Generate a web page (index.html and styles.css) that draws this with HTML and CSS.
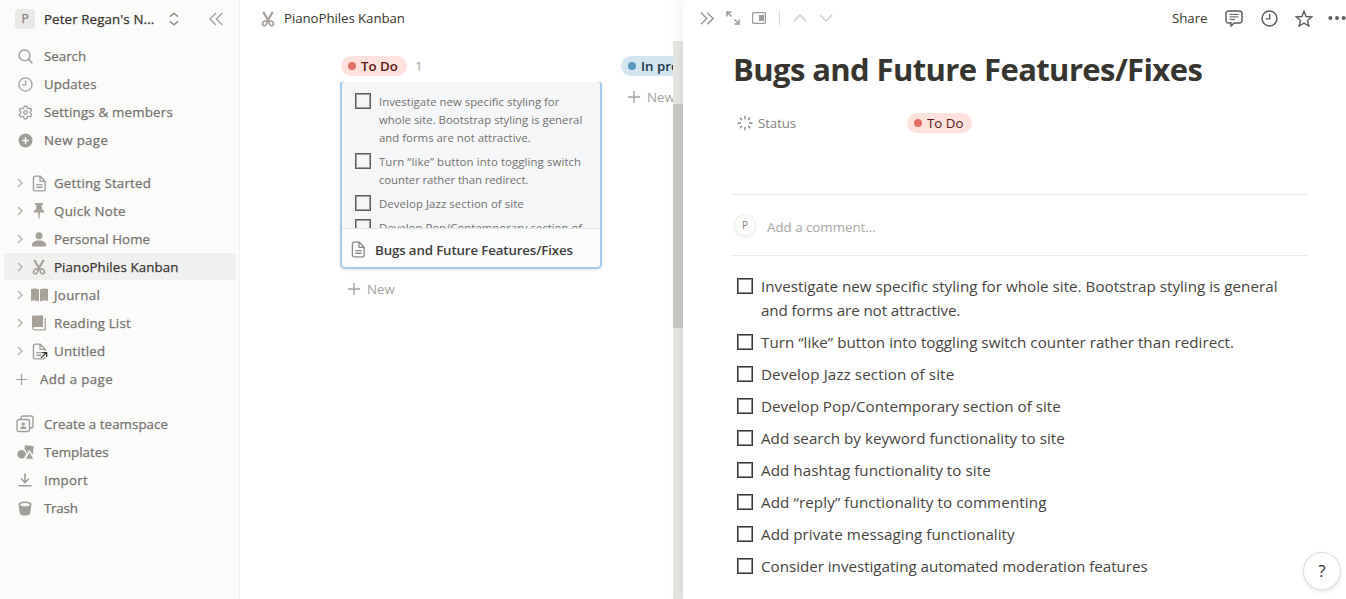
FILE: index.html
```html
<!DOCTYPE html>
<html lang="en">
<head>
<meta charset="utf-8">
<title>PianoPhiles Kanban</title>
<link rel="stylesheet" href="styles.css">
</head>
<body>
<svg class="defs" width="0" height="0">
  <defs>
    <symbol id="page" viewBox="0 0 16 18"><path d="M3.500 1.200h5.300L14 6.600v8.200a2 2 0 0 1-2 2H3.500a2 2 0 0 1-2-2V3.200a2 2 0 0 1 2-2zM8.600 1.600v5.200h5.200M4.600 10.200h6.600M4.600 13h6.600" fill="none" stroke="currentColor" stroke-width="1.400"/></symbol>
    <symbol id="caret" viewBox="0 0 6 10"><path d="M1 1l4 4-4 4" fill="none" stroke="currentColor" stroke-width="1.400"/></symbol>
    <symbol id="plus" viewBox="0 0 12 12"><path d="M6 0v12M0 6h12" stroke="currentColor" stroke-width="1.300"/></symbol>
    <symbol id="clock" viewBox="0 0 16 16"><circle cx="8" cy="8" r="7" fill="none" stroke="currentColor" stroke-width="1.400"/><path d="M8.200 3.800v4.600H4.400" fill="none" stroke="currentColor" stroke-width="1.300"/></symbol>
    <symbol id="scissors" viewBox="0 0 14 16"><path d="M2.300 1l5.900 10M11.700 1L5.800 11" fill="none" stroke="currentColor" stroke-width="2.300"/><ellipse cx="3.700" cy="12.400" rx="1.900" ry="2.500" transform="rotate(32 3.700 12.400)" fill="none" stroke="currentColor" stroke-width="1.700"/><ellipse cx="10.300" cy="12.400" rx="1.900" ry="2.500" transform="rotate(-32 10.300 12.400)" fill="none" stroke="currentColor" stroke-width="1.700"/></symbol>
  </defs>
</svg>
<div class="app">
  <nav class="sidebar">
    <div class="workspace">
      <span class="workspace-avatar">P</span>
      <span class="workspace-name">Peter Regan's N...</span>
      <svg class="switcher" width="10" height="14" viewBox="0 0 10 14"><path d="M1 4.600L5 1.200l4 3.400M1 9.400l4 3.400 4-3.400" fill="none" stroke="currentColor" stroke-width="1.500"/></svg>
      <svg class="collapse" width="14" height="14" viewBox="0 0 14 14"><path d="M7 1L1 7l6 6M13.300 1l-6 6 6 6" fill="none" stroke="currentColor" stroke-width="1.400"/></svg>
    </div>
    <div class="group">
      <div class="item"><span class="ico"><svg width="15" height="15" viewBox="0 0 15 15"><circle cx="6.600" cy="6.400" r="5.400" fill="none" stroke="currentColor" stroke-width="1.400"/><path d="M10.600 10.300l3.700 3.800" stroke="currentColor" stroke-width="1.600"/></svg></span><span class="t-search">Search</span></div>
      <div class="item"><span class="ico"><svg width="15" height="15"><use href="#clock"/></svg></span><span class="t-updates">Updates</span></div>
      <div class="item"><span class="ico"><svg width="15" height="15" viewBox="0 0 15 15"><path d="M6.200.7h2.600l.5 2 1.100.65 2-.6 1.300 2.250-1.500 1.450v1.300l1.500 1.450-1.300 2.250-2-.6-1.100.65-.5 2H6.200l-.5-2-1.100-.65-2 .6L1.300 9.200l1.500-1.450v-1.300L1.300 5l1.300-2.250 2 .6 1.100-.65z" transform="translate(0 .4)" fill="none" stroke="currentColor" stroke-width="1.300" stroke-linejoin="round"/><circle cx="7.500" cy="7.500" r="1.800" fill="none" stroke="currentColor" stroke-width="1.300"/></svg></span><span class="t-settings">Settings &amp; members</span></div>
      <div class="item"><span class="ico"><svg width="15" height="15" viewBox="0 0 15 15"><circle cx="7.500" cy="7.500" r="7" fill="currentColor"/><path d="M7.500 4.200v6.600M4.200 7.500h6.600" stroke="#fbfbfa" stroke-width="1.500"/></svg></span><span class="t-newpage">New page</span></div>
    </div>
    <div class="group pages">
      <div class="item"><svg class="caret" width="6" height="10"><use href="#caret"/></svg><span class="ico"><svg width="15" height="17"><use href="#page"/></svg></span><span class="t-getting">Getting Started</span></div>
      <div class="item"><svg class="caret" width="6" height="10"><use href="#caret"/></svg><span class="ico solid"><svg width="12" height="16" viewBox="0 0 12 16"><path d="M2 0h8v1.600L8.600 2.500l.5 4c1.500.6 2.400 1.700 2.400 3H7l-.6 6.200h-.8L5 9.500H.5c0-1.300.9-2.400 2.400-3l.5-4L2 1.600z" fill="currentColor"/></svg></span><span class="t-quick">Quick Note</span></div>
      <div class="item"><svg class="caret" width="6" height="10"><use href="#caret"/></svg><span class="ico solid"><svg width="14" height="15" viewBox="0 0 14 15"><circle cx="7" cy="3.700" r="3.500" fill="currentColor"/><path d="M0 14.500v-1.500c0-3 3-4.500 7-4.500s7 1.500 7 4.500v1.500z" fill="currentColor"/></svg></span><span class="t-personal">Personal Home</span></div>
      <div class="item active"><svg class="caret" width="6" height="10"><use href="#caret"/></svg><span class="ico solid"><svg width="14" height="16"><use href="#scissors"/></svg></span><span class="t-piano">PianoPhiles Kanban</span></div>
      <div class="item"><svg class="caret" width="6" height="10"><use href="#caret"/></svg><span class="ico solid"><svg width="17" height="14" viewBox="0 0 17 14"><path d="M0 1c3-.9 6-.7 8 .6v12c-2-1.100-5-1.300-8-.6zM17 1c-3-.9-6-.7-8 .6v12c2-1.100 5-1.300 8-.6z" fill="currentColor"/></svg></span><span class="t-journal">Journal</span></div>
      <div class="item"><svg class="caret" width="6" height="10"><use href="#caret"/></svg><span class="ico solid"><svg width="14" height="16" viewBox="0 0 14 16"><path d="M1.300.5H11v11.500H2.500c-.8 0-1.200.3-1.200.8H0V2C0 1 .5.500 1.300.5z" fill="currentColor"/><path d="M13.200 3v11.800H3c-1.400 0-2.300-.6-2.300-2.300" fill="none" stroke="currentColor" stroke-width="1.300"/></svg></span><span class="t-reading">Reading List</span></div>
      <div class="item"><svg class="caret" width="6" height="10"><use href="#caret"/></svg><span class="ico linked"><svg width="15" height="17"><use href="#page"/></svg><svg class="link-arrow" width="8" height="8" viewBox="0 0 9 9"><path d="M1 8l5.500-5.500M2.500 1.700h5v5" fill="none" stroke="#fbfbfa" stroke-width="3.500"/><path d="M1 8l6-6M2.500 1.700h5v5" fill="none" stroke="#37352f" stroke-width="1.400"/></svg></span><span class="t-untitled">Untitled</span></div>
      <div class="item add"><svg width="11" height="11"><use href="#plus"/></svg><span class="t-addpage">Add a page</span></div>
    </div>
    <div class="group tools">
      <div class="item"><span class="ico"><svg width="18" height="18" viewBox="0 0 18 18"><path d="M5 4V3a2 2 0 0 1 2-2h8a2 2 0 0 1 2 2v8a2 2 0 0 1-2 2h-1.200" fill="none" stroke="currentColor" stroke-width="1.400"/><rect x="1" y="4.500" width="12.500" height="12" rx="2" fill="none" stroke="currentColor" stroke-width="1.400"/><circle cx="7.200" cy="9" r="1.700" fill="currentColor"/><path d="M4 14c0-2 1.200-2.800 3.200-2.800s3.200.8 3.200 2.800z" fill="currentColor"/></svg></span><span class="t-create">Create a teamspace</span></div>
      <div class="item"><span class="ico"><svg width="17" height="15" viewBox="0 0 17 15"><path d="M8 .3l8.600.8-.6 8-1-.1-2.500-4.200-3 4.500C10 6 8.500 4.600 7.400 4.300z" fill="currentColor"/><circle cx="4.600" cy="9.200" r="4.200" fill="currentColor"/><path d="M12.500 6.800l4.300 7.400H8.200z" fill="currentColor" stroke="#fbfbfa" stroke-width=".8"/></svg></span><span class="t-templates">Templates</span></div>
      <div class="item"><span class="ico"><svg width="14" height="14" viewBox="0 0 14 14"><path d="M7 .5v8.700M3 5.500l4 4 4-4M.3 12.700h13.400" fill="none" stroke="currentColor" stroke-width="1.600"/></svg></span><span class="t-import">Import</span></div>
      <div class="item"><span class="ico"><svg width="14" height="15" viewBox="0 0 14 15"><path d="M.5 3.500C.5 1.500 3 .5 7 .5s6.500 1 6.500 3l-1.300 8.700c-.3 1.500-2.400 2.300-5.200 2.300s-4.900-.8-5.200-2.300z" fill="currentColor"/><ellipse cx="7" cy="3.700" rx="4.700" ry="1.600" fill="#fbfbfa"/></svg></span><span class="t-trash">Trash</span></div>
    </div>
  </nav>

  <main class="main">
    <header class="crumb"><svg width="14" height="16"><use href="#scissors"/></svg><span class="t-crumb">PianoPhiles Kanban</span></header>
    <div class="board-wrap">
      <div class="board">
        <section class="column">
          <div class="column-head"><span class="pill red"><i></i><b class="t-todo">To Do</b></span><span class="count">1</span></div>
          <div class="card-clip">
            <article class="card">
              <div class="preview">
                <div class="todo"><span class="box"></span><p><span class="c1">Investigate new specific styling for</span><br><span class="c2">whole site. Bootstrap styling is general</span><br><span class="c3">and forms are not attractive.</span></p></div>
                <div class="todo"><span class="box"></span><p><span class="c4">Turn “like” button into toggling switch</span><br><span class="c5">counter rather than redirect.</span></p></div>
                <div class="todo"><span class="box"></span><p><span class="c6">Develop Jazz section of site</span></p></div>
                <div class="todo"><span class="box"></span><p><span class="c7">Develop Pop/Contemporary section of</span></p></div>
              </div>
              <div class="card-title"><svg width="15" height="17"><use href="#page"/></svg><span class="t-card">Bugs and Future Features/Fixes</span></div>
            </article>
          </div>
          <div class="new"><svg width="12" height="12"><use href="#plus"/></svg><span>New</span></div>
        </section>
        <section class="column">
          <div class="column-head"><span class="pill blue"><i></i><b class="t-prog">In progress</b></span></div>
          <div class="new near"><svg width="12" height="12"><use href="#plus"/></svg><span>New</span></div>
        </section>
      </div>
      <div class="scrollbar"><div class="thumb"></div></div>
    </div>
  </main>

  <aside class="peek">
    <header class="peek-bar">
      <svg class="b-close" width="14" height="13" viewBox="0 0 14 13"><path d="M1 .7l5.800 5.800L1 12.300M7.300.7l5.800 5.800-5.800 5.800" fill="none" stroke="currentColor" stroke-width="1.500"/></svg>
      <svg class="b-expand" width="14" height="14" viewBox="0 0 14 14"><path d="M1 5.500V1h4.500M1.200 1.200l4.300 4.300M13 8.500V13H8.500M12.800 12.800L8.500 8.500" fill="none" stroke="currentColor" stroke-width="1.500"/></svg>
      <svg class="b-side" width="14" height="12" viewBox="0 0 14 12"><rect x=".6" y=".6" width="12.800" height="10.800" rx="1.200" fill="none" stroke="currentColor" stroke-width="1.300"/><path d="M7 3h5v6H7z" fill="currentColor"/></svg>
      <span class="sep"></span>
      <svg class="b-up" width="14" height="8" viewBox="0 0 14 8"><path d="M.8 7.200L7 1l6.200 6.200" fill="none" stroke="currentColor" stroke-width="1.400"/></svg>
      <svg class="b-down" width="14" height="8" viewBox="0 0 14 8"><path d="M.8.8L7 7 13.200.8" fill="none" stroke="currentColor" stroke-width="1.400"/></svg>
      <span class="share">Share</span>
      <svg class="b-comment" width="18" height="17" viewBox="0 0 18 17"><path d="M3.500 1h11a2.500 2.500 0 0 1 2.500 2.500v7a2.500 2.500 0 0 1-2.500 2.500H9.300L6 15.900V13H3.500A2.500 2.500 0 0 1 1 10.500v-7A2.500 2.500 0 0 1 3.500 1z" fill="none" stroke="currentColor" stroke-width="1.400"/><path d="M4.500 4.400h9M4.500 6.900h9M4.500 9.400h5.500" stroke="currentColor"/></svg>
      <svg class="b-clock" width="17" height="17"><use href="#clock"/></svg>
      <svg class="b-star" width="18" height="17" viewBox="0 0 18 17"><path d="M9 1.300l2.100 5.200 5.700.4-4.400 3.600 1.400 5.500L9 13l-4.800 3 1.400-5.500L1.200 6.900l5.700-.4z" fill="none" stroke="currentColor" stroke-width="1.400"/></svg>
      <svg class="b-more" width="18" height="4" viewBox="0 0 18 4"><circle cx="2.300" cy="2" r="1.950" fill="currentColor"/><circle cx="9" cy="2" r="1.950" fill="currentColor"/><circle cx="15.700" cy="2" r="1.950" fill="currentColor"/></svg>
    </header>
    <div class="doc">
      <h1><span class="t-title">Bugs and Future Features/Fixes</span></h1>
      <div class="prop">
        <svg width="16" height="16" viewBox="0 0 16 16"><path d="M8 .7v3.500M8 11.800v3.500M.5 8H4M12 8h3.500M2.800 2.800l2.300 2.300M10.900 10.900l2.300 2.300M13.200 2.800l-2.300 2.300M5.100 10.900l-2.300 2.300" stroke="currentColor" stroke-width="1.300"/></svg>
        <span class="prop-name">Status</span>
        <span class="pill red small"><i></i><b class="t-todo2">To Do</b></span>
      </div>
      <div class="comment"><span class="user">P</span><span class="placeholder">Add a comment...</span></div>
      <div class="list">
        <div class="todo"><span class="box"></span><p><span class="d1">Investigate new specific styling for whole site. Bootstrap styling is general</span><br><span class="d2">and forms are not attractive.</span></p></div>
        <div class="todo"><span class="box"></span><p><span class="d3">Turn “like” button into toggling switch counter rather than redirect.</span></p></div>
        <div class="todo"><span class="box"></span><p><span class="d4">Develop Jazz section of site</span></p></div>
        <div class="todo"><span class="box"></span><p><span class="d5">Develop Pop/Contemporary section of site</span></p></div>
        <div class="todo"><span class="box"></span><p><span class="d6">Add search by keyword functionality to site</span></p></div>
        <div class="todo"><span class="box"></span><p><span class="d7">Add hashtag functionality to site</span></p></div>
        <div class="todo"><span class="box"></span><p><span class="d8">Add “reply” functionality to commenting</span></p></div>
        <div class="todo"><span class="box"></span><p><span class="d9">Add private messaging functionality</span></p></div>
        <div class="todo"><span class="box"></span><p><span class="d10">Consider investigating automated moderation features</span></p></div>
      </div>
    </div>
    <span class="help">?</span>
  </aside>
</div>
</body>
</html>
```

FILE: styles.css
```css
* { box-sizing: border-box; }
body {
  margin: 0;
  background: #fff;
  color: #37352f;
  font-family: "Open Sans", "Noto Sans", sans-serif;
  font-size: 13.3px;
}
svg { display: block; flex: none; }
p, h1 { margin: 0; }
.defs { position: absolute; }
.app { display: flex; height: 599px; overflow: hidden; white-space: nowrap; }

/* Sidebar */
.sidebar {
  width: 240px;
  flex: none;
  background: #fbfbfa;
  border-right: 1px solid #f3f3f2;
  color: #75746f;
  font-weight: 500;
  -webkit-text-stroke: .25px currentColor;
}
.workspace { display: flex; align-items: center; height: 38px; padding-left: 15px; }
.workspace-avatar {
  width: 20px; height: 20px; border-radius: 3px; background: #e9e9e7;
  font-size: 12px; line-height: 20px; text-align: center; color: #84837f;
}
.workspace-name { width: 111px; margin: 0 14px 0 9px; color: #37352f; letter-spacing: .12px; }
.switcher { color: #91908c; }
.collapse { margin-left: 30px; color: #a3a29e; }
.group { margin-top: 4px; }
.pages { margin-top: 15px; }
.tools { margin-top: 17px; }
.item { display: flex; align-items: center; height: 28px; margin: 0 3px 0 4px; padding-left: 10px; }
.ico { display: flex; width: 22px; justify-content: center; margin-right: 8px; color: #9f9e9a; }
.pages .item { padding-left: 13px; }
.pages .ico { margin: 0 4px 0 5px; }
.caret { color: #b3b2ae; }
.ico.solid, .crumb svg { color: #a6a299; }
.linked { position: relative; }
.link-arrow { position: absolute; right: 2px; bottom: 1px; }
.pages .active {
  height: 27px; margin-bottom: 1px; border-radius: 3px; background: #f0f0ef;
  color: #37352f;
}
.pages .add { padding-left: 12px; gap: 13px; }
.add svg { color: #9f9e9a; }

/* Board */
.main { width: 443px; flex: none; }
.crumb { display: flex; align-items: center; gap: 9px; height: 41px; padding: 0 0 4px 21px; }
.t-crumb { margin-top: -2px; letter-spacing: -.08px; }
.board-wrap { display: flex; height: 558px; }
.board { display: flex; gap: 18px; width: 433px; padding: 15px 0 0 100px; overflow: hidden; }
.column { width: 262px; flex: none; }
.column:nth-child(2) { margin-left: 1px; }
.column-head { display: flex; align-items: center; gap: 8px; height: 20px; padding-left: 1px; }
.column:nth-child(2) .column-head { padding-left: 0; }
.count { color: #a5a4a0; }
.pill {
  display: inline-flex; align-items: center; height: 20px; padding: 0 9px 0 7px;
  border-radius: 10px;
}
.pill i { width: 8px; height: 8px; margin-right: 5px; border-radius: 50%; }
.pill b { font-weight: 400; }
.red { background: #ffe2dd; color: #5d1715; }
.red i { background: #e16f64; }
.blue { background: #d3e5ef; color: #183347; }
.blue i { background: #5b97bd; }
.column .pill b { font-weight: 600; }
.card-clip { height: 191px; margin: 6px -4px 0; padding: 0 4px; overflow: hidden; }
.card {
  height: 189px; margin-top: -2px; border: 2px solid #a6caec; border-radius: 5px;
  background: #fbfcfe; box-shadow: 0 1px 3px rgba(15, 15, 15, .12); overflow: hidden;
}
.preview {
  height: 147px; padding: 11px 13px 0; overflow: hidden; background: #f5f6f8;
  border-bottom: 1px solid #e4e6e8; font-size: 11.400px; line-height: 18px; color: #72716d;
}
.todo { display: flex; gap: 8px; }
.box {
  width: 16px; height: 16px; flex: none;
  border: 1px solid #37352f; box-shadow: inset 0 0 0 1px #8d8c88;
}
.preview .todo { margin-bottom: 6px; }
.preview .box { border-color: #5e5d59; box-shadow: inset 0 0 0 1px #a09f9c; }
.card-title {
  display: flex; align-items: center; gap: 8px; height: 41px; padding-left: 9px;
  font-weight: 600; color: #3e3d39;
}
.t-card { margin-left: 1px; }
.card-title svg { color: #8b8a87; }
.new { display: flex; align-items: center; gap: 7px; height: 32px; padding-left: 8px; color: #a3a29e; }
.near { margin-top: 5px; padding-left: 7px; }
.scrollbar { width: 10px; height: 558px; padding-top: 63px; background: #e6e6e3; }
.thumb { height: 224px; background: #cbcac5; }

/* Side peek */
.peek {
  position: relative; width: 663px; flex: none; background: #fff;
  box-shadow: -2px 0 14px rgba(15, 15, 15, .07);
}
.peek-bar { display: flex; align-items: center; height: 36px; padding-left: 17px; color: #9b9a96; }
.b-expand { margin-left: 12px; }
.b-side { margin-left: 12px; }
.sep { width: 1px; height: 14px; flex: none; margin: 0 13px 0 13px; background: #d8d8d6; }
.b-up, .b-down { color: #cfcecb; }
.b-down { margin-left: 12px; }
.share { width: 36px; flex: none; margin-left: 339px; color: #37352f; letter-spacing: -.05px; }
.b-comment, .b-clock, .b-star, .b-more { color: #5c5b56; }
.b-comment { margin-left: 17px; }
.b-clock { margin-left: 18px; }
.b-star { margin-left: 17px; }
.b-more { margin-left: 15px; }
.doc { width: 577px; margin-left: 48px; }
h1 { height: 68px; padding-left: 2px; font-size: 31px; line-height: 66px; font-weight: 700; }
.prop { display: flex; align-items: center; height: 20px; margin-top: 9px; padding-left: 6px; color: #84837f; }
.prop-name { width: 148px; margin-left: 5px; }
.prop .pill { margin-left: 1px; }
.comment {
  display: flex; align-items: center; height: 62px; margin-top: 61px; padding-left: 4px;
  border-top: 1px solid #ebebea; border-bottom: 1px solid #ebebea;
}
.user {
  width: 20px; height: 20px; border-radius: 50%; background: #fff;
  box-shadow: 0 0 0 1px #efefee, 0 2px 4px rgba(15, 15, 15, .12);
  font-size: 10px; line-height: 20px; text-align: center; color: #84837f;
}
.placeholder { margin: 3px 0 0 12px; color: #a9a8a4; }
.list { padding: 18px 0 0 6px; font-size: 15.200px; line-height: 24px; color: #474540; }
.list .todo { margin-bottom: 8px; }
.list .box { margin-top: 4px; }
.help {
  position: absolute; right: 6px; bottom: 10px; width: 36px; height: 36px; border-radius: 50%;
  background: #fff; box-shadow: 0 0 0 1px #dcdcdb, 0 2px 5px rgba(15, 15, 15, .12);
  font-size: 17px; line-height: 36px; text-align: center;
}

/* Tracking */
.t-updates { letter-spacing: .1px; }
.t-settings, .t-getting, .t-untitled { letter-spacing: .2px; }
.t-newpage { letter-spacing: .35px; }
.t-quick, .t-journal, .t-import { letter-spacing: .3px; }
.t-personal, .t-create { letter-spacing: .07px; }
.t-piano { letter-spacing: .12px; }
.t-reading { letter-spacing: .17px; }
.t-addpage { letter-spacing: .38px; }
.t-trash { letter-spacing: -.2px; }
.t-card { letter-spacing: -.14px; }
.t-title { letter-spacing: -.6px; }
.c4 { letter-spacing: .1px; }
.c5 { letter-spacing: -.1px; }
.c6 { letter-spacing: .07px; }
.d1 { letter-spacing: .013px; }
.d2 { letter-spacing: -.1px; }
.d3 { letter-spacing: .025px; }
.d4, .d8 { letter-spacing: .1px; }
.d7 { letter-spacing: .06px; }
.d9 { letter-spacing: .04px; }
.d10 { letter-spacing: -.03px; }
.prop-name { letter-spacing: -.1px; }
```
